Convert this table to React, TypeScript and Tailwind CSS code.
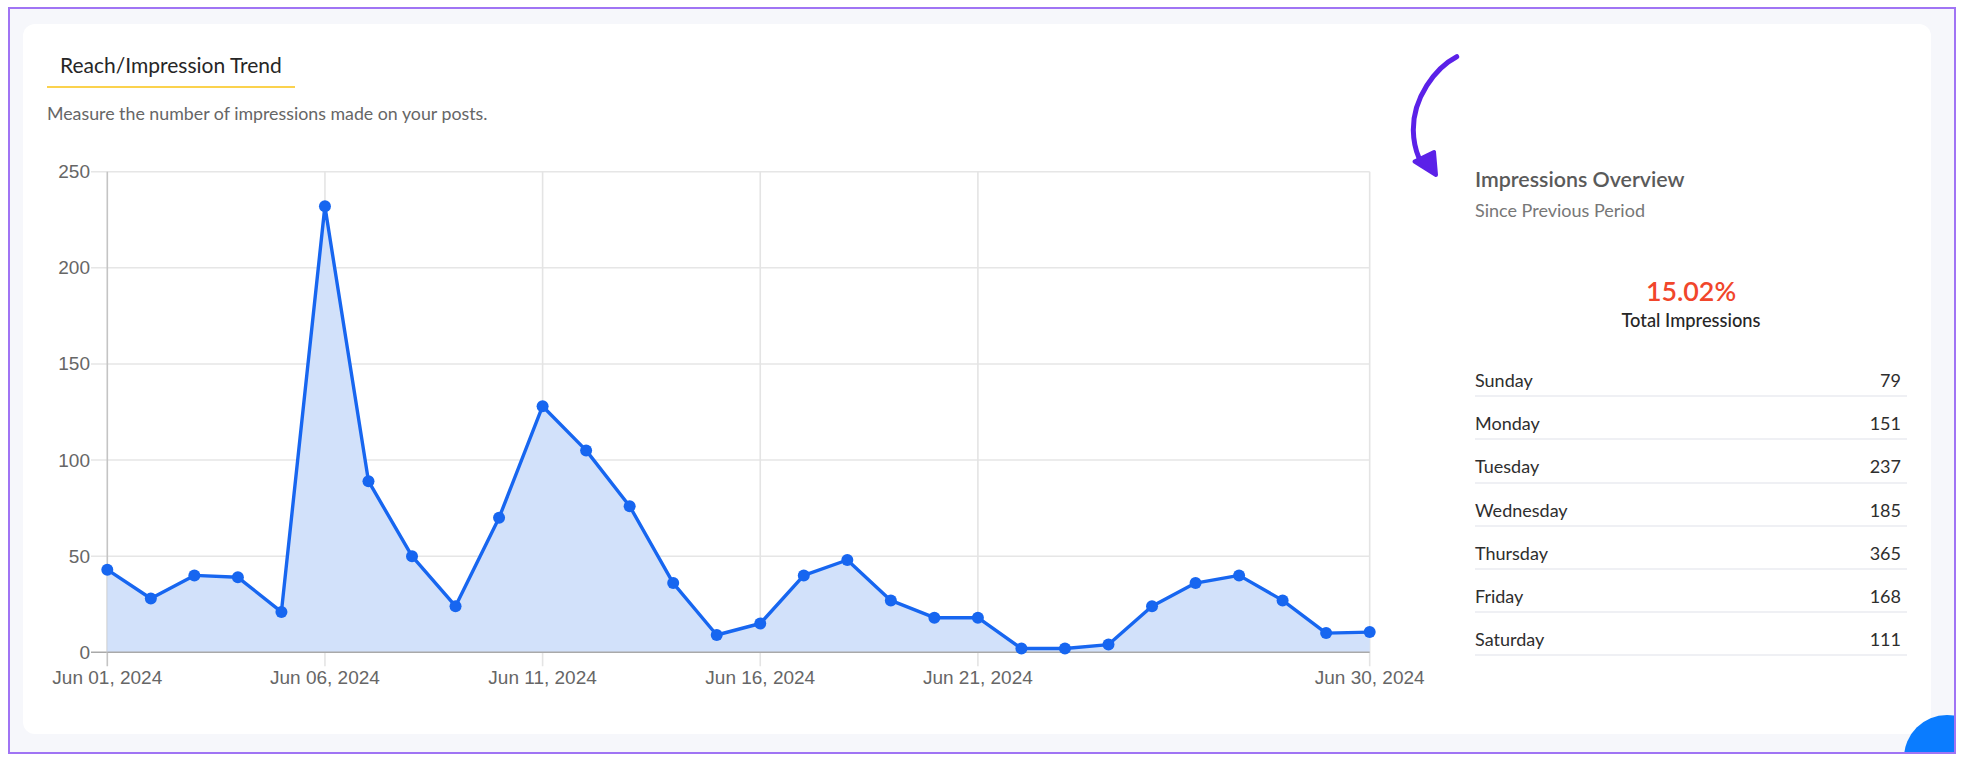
import React from 'react'

const impresiones = [43, 28, 40, 39, 21, 232, 89, 50, 24, 70, 128, 105, 76, 36, 9, 15, 40, 48, 27, 18, 18, 2, 2, 4, 24, 36, 40, 27, 10, 10.5]

const dias = [
  { dia: 'Sunday', valor: 79 },
  { dia: 'Monday', valor: 151 },
  { dia: 'Tuesday', valor: 237 },
  { dia: 'Wednesday', valor: 185 },
  { dia: 'Thursday', valor: 365 },
  { dia: 'Friday', valor: 168 },
  { dia: 'Saturday', valor: 111 },
]

// área del gráfico dentro del svg
const X0 = 60.3
const PASO = 43.53
const Y0 = 502.3
const ESCALA = 1.9224
const px = (i: number) => X0 + i * PASO
const py = (v: number) => Y0 - v * ESCALA

function Grafico() {
  const linea = impresiones.map((v, i) => `${i === 0 ? 'M' : 'L'}${px(i).toFixed(1)} ${py(v).toFixed(1)}`).join(' ')
  const area = `${linea} L${px(29).toFixed(1)} ${Y0} L${X0} ${Y0} Z`
  const derecha = px(29)
  const etiquetas = [
    { i: 0, t: 'Jun 01, 2024' },
    { i: 5, t: 'Jun 06, 2024' },
    { i: 10, t: 'Jun 11, 2024' },
    { i: 15, t: 'Jun 16, 2024' },
    { i: 20, t: 'Jun 21, 2024' },
    { i: 29, t: 'Jun 30, 2024' },
  ]
  return (
    <svg width="1400" height="550" className="block mt-[25px]" style={{ fontFamily: '"Liberation Sans", Arial, sans-serif' }}>
      {[0, 50, 100, 150, 200, 250].map(v => (
        <g key={v}>
          <line x1={44} x2={derecha} y1={py(v)} y2={py(v)} stroke={v === 0 ? '#a9a9a9' : '#e6e6e6'} strokeWidth={1.6} />
          <text x={43} y={py(v) + 6.5} textAnchor="end" fontSize={19} fill="#666">{v}</text>
        </g>
      ))}
      {etiquetas.map(e => (
        <g key={e.i}>
          <line x1={px(e.i)} x2={px(e.i)} y1={py(250)} y2={Y0 + 14} stroke={e.i === 0 ? '#c4c4c4' : '#e4e4e4'} strokeWidth={1.6} />
          <text x={px(e.i)} y={533.5} textAnchor="middle" fontSize={19} fill="#666">{e.t}</text>
        </g>
      ))}
      <path d={area} fill="#d2e1fa" />
      <line x1={X0} x2={derecha} y1={Y0} y2={Y0} stroke="#a9a9a9" strokeWidth={1.6} />
      <path d={linea} fill="none" stroke="#1766f0" strokeWidth={3.4} strokeLinejoin="round" />
      {impresiones.map((v, i) => (
        <circle key={i} cx={px(i)} cy={py(v)} r={6} fill="#1766f0" />
      ))}
    </svg>
  )
}

function Flecha() {
  return (
    <svg width="60" height="135" viewBox="0 0 60 135" className="absolute left-[-70px] top-[-1px]">
      <path d="M51.7 6.7 C30 18, 8 48, 8.3 80 C8.5 92, 10.5 100, 14 108" fill="none" stroke="#5b21e8" strokeWidth={5} strokeLinecap="round" />
      <polygon points="9.5,111.5 29,102 31,125" fill="#5b21e8" stroke="#5b21e8" strokeWidth={4} strokeLinejoin="round" />
    </svg>
  )
}

export default function App() {
  return (
    <div className="w-[1963px] h-[761px] bg-white pt-[7px] pl-[8px]" style={{ fontFamily: 'Lato, "Noto Sans", sans-serif' }}>
      <div className="relative w-[1948px] h-[747px] border-2 border-[#a074f4] bg-[#f6f7fb] pt-[15px] pl-[13px] overflow-hidden">
        <div className="w-[1908px] h-[710px] bg-white rounded-xl flex px-[24px] pt-[27px]">

          <div className="flex-1">
            <div className="inline-block px-[13px] pb-[7px] border-b-2 border-[#fbd24e]">
              <h2 className="text-[21px] leading-[28px] text-[#262626]">Reach/Impression Trend</h2>
            </div>
            <p className="mt-[13px] text-[17.8px] leading-[24px] text-[#666]">Measure the number of impressions made on your posts.</p>
            <Grafico />
          </div>

          <div className="relative w-[432px] pt-[114px]">
            <Flecha />
            <h3 className="text-[21.4px] leading-[28px] font-semibold text-[#5a5a5a]">Impressions Overview</h3>
            <p className="mt-[5px] text-[18px] leading-[24px] text-[#777]">Since Previous Period</p>

            <div className="mt-[53px] text-center">
              <div className="text-[26.8px] leading-[32px] font-semibold text-[#f1462b]">15.02%</div>
              <div className="mt-[1px] text-[18.3px] leading-[24px] font-medium text-[#262626]">Total Impressions</div>
            </div>

            <div className="mt-[22px]">
              {dias.map(d => (
                <div key={d.dia} className="flex justify-between items-center pt-[14px] pb-[3.2px] pr-[6px] border-b-2 border-[#eff0f4] text-[18px] leading-[24px] text-[#2e2e2e]">
                  <span>{d.dia}</span>
                  <span>{d.valor}</span>
                </div>
              ))}
            </div>
          </div>
        </div>

        <div className="absolute left-[1894px] top-[706px] w-[86px] h-[86px] rounded-full bg-[#0a7cff]" />
      </div>
    </div>
  )
}
